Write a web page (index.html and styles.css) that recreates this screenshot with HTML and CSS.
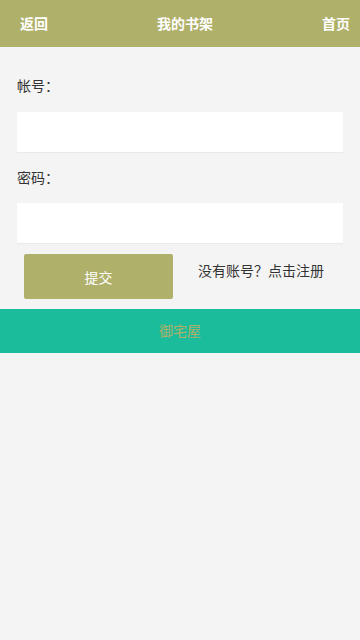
FILE: index.html
```html
<!DOCTYPE html>
<html lang="zh">
<head>
<meta charset="utf-8">
<title>我的书架</title>
<link rel="stylesheet" href="styles.css">
</head>
<body>
<header class="topbar">
  <a class="nav-link">返回</a>
  <span class="nav-title">我的书架</span>
  <a class="nav-link">首页</a>
</header>
<main class="form">
  <label class="label">帐号：</label>
  <div class="input"></div>
  <label class="label label-second">密码：</label>
  <div class="input"></div>
  <div class="actions">
    <div class="submit">提交</div>
    <span class="register">没有账号？点击注册</span>
  </div>
</main>
<footer class="footer">御宅屋</footer>
</body>
</html>
```
FILE: styles.css
```css
html, body {
  margin: 0;
  padding: 0;
  background: #f4f4f4;
  font-family: "Noto Sans CJK SC", "Noto Sans", sans-serif;
  font-size: 14px;
  color: #333;
}
.topbar {
  height: 47px;
  background: #afb06a;
  display: flex;
  justify-content: space-between;
  align-items: center;
  padding: 0 10px 2px 20px;
  box-sizing: border-box;
  color: #fff;
  font-weight: bold;
  font-size: 14px;
}
.nav-link, .nav-title {
  line-height: 20px;
}
.form {
  display: flex;
  flex-direction: column;
  padding: 28px 17px 0;
}
.label {
  line-height: 20px;
  height: 20px;
  margin-bottom: 17px;
}
.label-second {
  margin-top: 15px;
  margin-bottom: 16px;
}
.input {
  height: 40px;
  background: #fff;
  box-shadow: 0 1px 1px rgba(0,0,0,0.04);
}
.actions {
  display: flex;
  align-items: flex-start;
  padding: 11px 0 0 7px;
  gap: 25px;
}
.submit {
  width: 149px;
  height: 45px;
  background: #afb06a;
  border-radius: 2px;
  color: #fff;
  display: flex;
  align-items: center;
  justify-content: center;
}
.register {
  line-height: 20px;
  margin-top: 6px;
}
.footer {
  margin-top: 10px;
  height: 44px;
  background: #1bbc9b;
  color: #b0b06a;
  display: flex;
  align-items: center;
  justify-content: center;
  font-size: 14px;
  padding-bottom: 3px;
  box-sizing: border-box;
}
```
